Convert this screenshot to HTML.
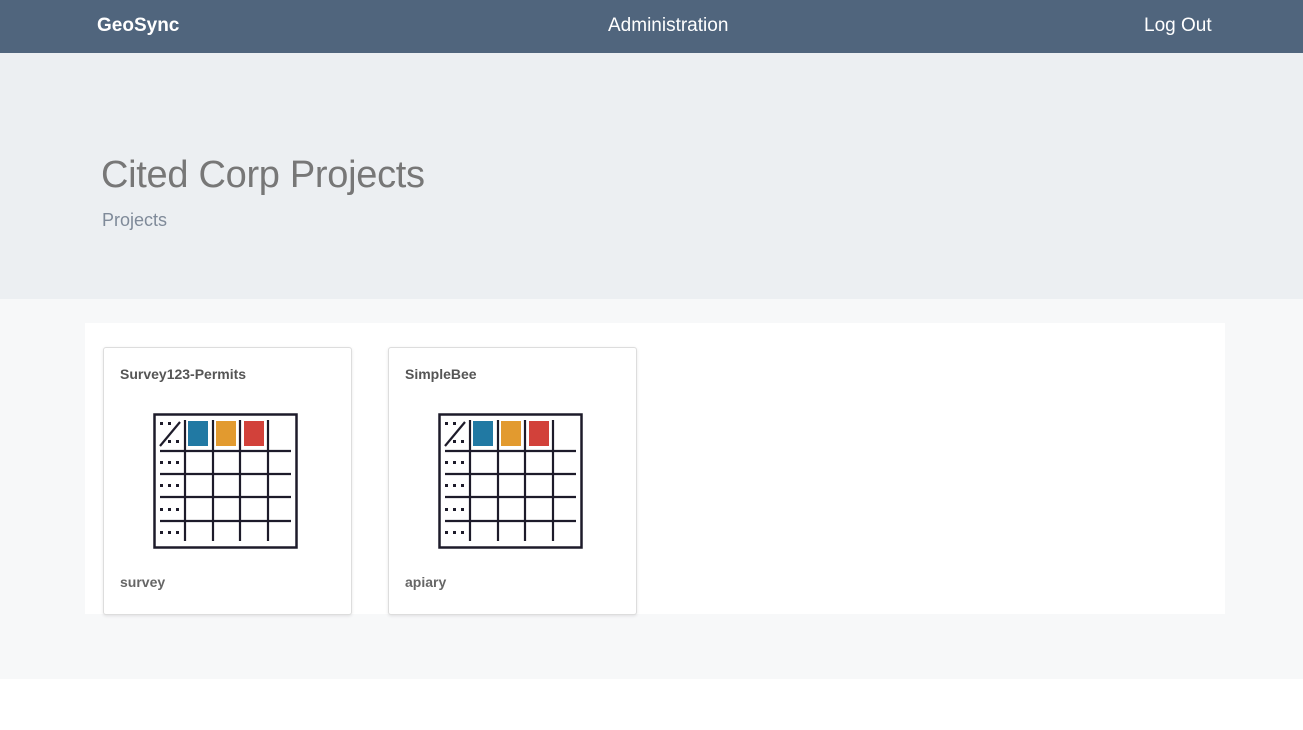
<!DOCTYPE html>
<html><head><meta charset="utf-8"><style>
*{margin:0;padding:0;box-sizing:border-box}
body{width:1303px;height:730px;background:#fff;font-family:"Liberation Sans",sans-serif;position:relative;overflow:hidden}
.nav{position:absolute;left:0;top:0;width:1303px;height:53px;background:#50657d;color:#fff}
.nav span{position:absolute;top:15px;font-size:19px}
.hero{position:absolute;top:53px;left:0;width:1303px;height:246px;background:#eceff2}
.hero h1{position:absolute;left:101px;top:101px;font-size:38px;font-weight:normal;color:#777;letter-spacing:-0.3px}
.hero p{position:absolute;left:102px;top:157px;font-size:18px;color:#7f8a99}
.main{position:absolute;top:299px;left:0;width:1303px;height:380px;background:#f7f8f9}
.panel{position:absolute;left:85px;top:24px;width:1140px;height:291px;background:#fff}
.card{position:absolute;top:347px;width:249px;height:268px;background:#fff;border:1px solid #ddd;border-radius:3px;box-shadow:0 1px 3px rgba(0,0,0,.1)}
.card b{position:absolute;left:16px;top:18px;font-size:14px;color:#555}
.card i{position:absolute;left:16px;top:226px;font-size:14px;color:#666;font-style:normal;font-weight:bold}
.card svg{position:absolute;left:49px;top:65px}
</style></head><body>
<div class="nav"><span style="left:97px;font-weight:bold">GeoSync</span><span style="left:608px">Administration</span><span style="left:1144px">Log Out</span></div>
<div class="hero"><h1>Cited Corp Projects</h1><p>Projects</p></div>
<div class="main"><div class="panel"></div></div>
<svg width="0" height="0" style="position:absolute"><defs><g id="ic" stroke="#1d1b2a" fill="none">
<rect x="1.5" y="1.5" width="142" height="133" stroke-width="2.5"/>
<g stroke-width="2.2"><line x1="32" y1="7" x2="32" y2="128"/><line x1="60" y1="7" x2="60" y2="128"/><line x1="87" y1="7" x2="87" y2="128"/><line x1="115" y1="7" x2="115" y2="128"/>
<line x1="7" y1="38" x2="138" y2="38"/><line x1="7" y1="61" x2="138" y2="61"/><line x1="7" y1="84" x2="138" y2="84"/><line x1="7" y1="108" x2="138" y2="108"/>
<line x1="7" y1="33" x2="27" y2="9"/></g>
<rect x="35" y="8" width="20" height="25" fill="#2179a3" stroke="none"/><rect x="63" y="8" width="20" height="25" fill="#e29a2f" stroke="none"/><rect x="91" y="8" width="20" height="25" fill="#d2413a" stroke="none"/>
<g fill="#1d1b2a" stroke="none"><rect x="7" y="9" width="3" height="3"/><rect x="15" y="9" width="3" height="3"/><rect x="15" y="27" width="3" height="3"/><rect x="23" y="27" width="3" height="3"/>
<rect x="7" y="48" width="3" height="3"/><rect x="15" y="48" width="3" height="3"/><rect x="23" y="48" width="3" height="3"/>
<rect x="7" y="71" width="3" height="3"/><rect x="15" y="71" width="3" height="3"/><rect x="23" y="71" width="3" height="3"/>
<rect x="7" y="95" width="3" height="3"/><rect x="15" y="95" width="3" height="3"/><rect x="23" y="95" width="3" height="3"/>
<rect x="7" y="118" width="3" height="3"/><rect x="15" y="118" width="3" height="3"/><rect x="23" y="118" width="3" height="3"/></g>
</g></defs></svg>
<div class="card" style="left:103px"><b>Survey123-Permits</b><svg width="146" height="137"><use href="#ic"/></svg><i>survey</i></div>
<div class="card" style="left:388px"><b>SimpleBee</b><svg width="146" height="137"><use href="#ic"/></svg><i>apiary</i></div>
</body></html>
